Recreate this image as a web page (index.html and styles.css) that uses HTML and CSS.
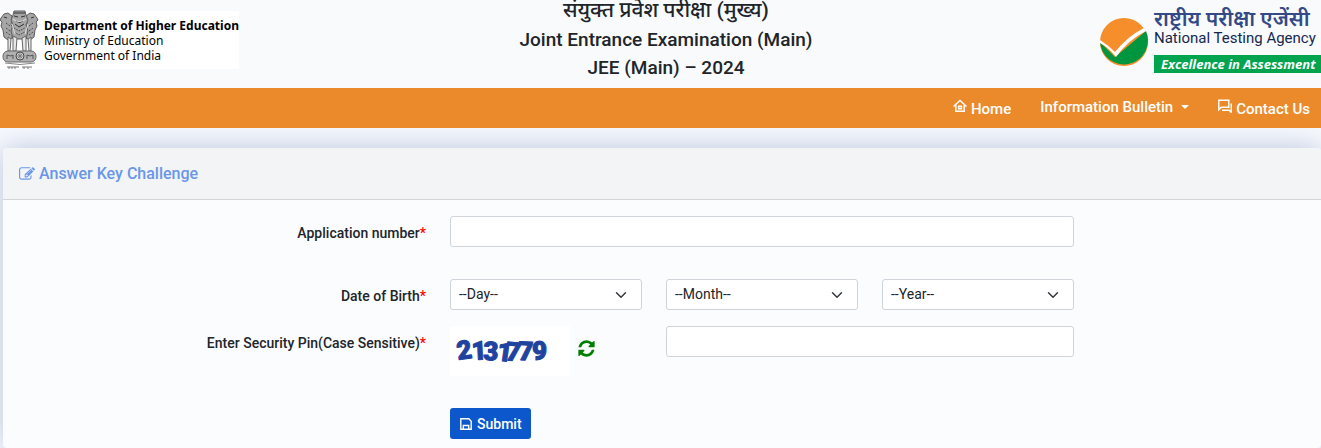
FILE: index.html
```html
<!DOCTYPE html>
<html lang="en">
<head>
    <meta charset="UTF-8">
    <meta name="viewport" content="width=device-width, initial-scale=1.0">
    <title>JEE (Main) 2024 - Answer Key Challenge</title>
    <link rel="stylesheet" href="styles.css">
</head>
<body>
    <header class="site-header">
        <div class="ministry">
            <svg class="emblem" viewBox="0 0 40 60" role="img" aria-label="State Emblem of India">
                <g fill="#a6a6a6" stroke="#5c5c5c" stroke-width="1">
                    <path d="M1 8l3-4 4-1 4 3v4l-1 4 2 5-1 9-4 2-4-3-1-7-2-4 1-4-2-2z"/>
                    <path d="M37 8l-3-4-4-1-4 3v4l1 4-2 5 1 9 4 2 4-3 1-7 2-4-1-4 2-2z"/>
                    <path d="M13 5l1-4h11l1 4 2 5-2 5 2 6-2 8H13l-2-8 2-6-2-5z"/>
                </g>
                <g fill="none" stroke="#333" stroke-width="1">
                    <path d="M14 3h11M14 6l4 1M25 6l-4 1M16 11q4 3 7 0M15 14l4 3 5-3M4 7l3 1M34 7l-3 1"/>
                    <path d="M14 18l5 3 6-3M14 22l5 3 6-3M6 13l4 3M33 13l-4 3M6 18l4 3M33 18l-4 3M6 22l4 3M33 22l-4 3" stroke-dasharray="1 1"/>
                </g>
                <path d="M13 9q6 5 13 0M12 14l3 10M28 14l-3 10" fill="none" stroke="#ddd" stroke-width="1"/>
                <g fill="#e8e8e8" stroke="#666" stroke-width="1">
                    <path d="M8 27l3 2-1 12H8zM13 26l4 2-1 13h-3zM22 28l4-2v15h-3zM28 29l3-2v14h-2z"/>
                </g>
                <rect x="3" y="41" width="33" height="11" rx="5" fill="#b0b0b0" stroke="#666"/>
                <circle cx="20" cy="46" r="4" fill="#ddd" stroke="#444"/>
                <path d="M20 42v8M16 46h8M17 43l6 6M23 43l-6 6" stroke="#777" stroke-width="1"/>
                <path d="M7 49v-4l4 1 2-1v4M27 49v-4l3 1 3-1v4" fill="none" stroke="#555"/>
                <path d="M5 53q15 3 30 0" fill="none" stroke="#888"/>
                <path d="M7 57h12M22 57h10M9 57v2M12 57v2M15 57v2M24 57v2M28 57v2" stroke="#777"/>
            </svg>
            <p class="ministry-text">
                <strong>Department of Higher Education</strong><br>
                Ministry of Education<br>
                Government of India
            </p>
        </div>

        <div class="exam-title">
            <h2 class="title-hi" lang="hi">संयुक्त प्रवेश परीक्षा (मुख्य)</h2>
            <h2>Joint Entrance Examination (Main)</h2>
            <h2>JEE (Main) – 2024</h2>
        </div>

        <div class="agency">
            <svg class="agency-mark" viewBox="0 0 48 48" aria-hidden="true">
                <circle cx="24" cy="24" r="24" fill="#f68e2b"/>
                <path d="M0 24l15 15L46 13A24 24 0 1 1 0 24z" fill="#009640"/>
                <path d="M0 22q8 5 15 12Q28 18 44 10l2 3Q28 22 16 39 9 30 0 25z" fill="#fff"/>
            </svg>
            <div class="agency-text">
                <span class="agency-hi" lang="hi">राष्ट्रीय परीक्षा एजेंसी</span>
                <span class="agency-en">National Testing Agency</span>
                <span class="agency-tag">Excellence in Assessment</span>
            </div>
        </div>
    </header>

    <nav class="navbar">
        <a href="#" class="nav-low">
            <svg class="icon-nav" viewBox="0 0 14 14" fill="none" stroke="#fff" stroke-width="1.5"><path d="M.5 7.500L7 1.500l6.500 6M2.800 6v6.300h8.400V6"/><path d="M5.600 7.300h2.800v2.500H5.600z"/></svg>
            Home
        </a>
        <a href="#">Information Bulletin <span class="caret"></span></a>
        <a href="#" class="nav-low">
            <svg class="icon-nav" viewBox="0 0 14 14" fill="none" stroke="#fff" stroke-width="1.400"><path d="M.8 10.800V1.200h10v7H3.300z"/><path d="M13.200 4.500v9l-2.200-2.300H4"/></svg>
            Contact Us
        </a>
    </nav>

    <main class="card">
        <div class="card-header">
            <svg class="icon-edit" viewBox="0 0 1792 1792" fill="currentColor"><path d="M888 1184l116-116-152-152-116 116v56h96v96h56zm440-720q-16-16-33 1L945 815q-17 17-1 33t33-1l350-350q17-17 1-33zm80 594v190q0 119-84.500 203.500T1120 1536H288q-119 0-203.500-84.500T0 1248V416q0-119 84.500-203.500T288 128h832q63 0 117 25 15 7 18 23 3 17-9 29l-49 49q-14 14-32 8-23-6-45-6H288q-66 0-113 47t-47 113v832q0 66 47 113t113 47h832q66 0 113-47t47-113v-126q0-13 9-22l64-64q15-15 35-7t20 29zm-96-738l288 288-672 672H640V928zm444 132l-92 92-288-288 92-92q28-28 68-28t68 28l152 152q28 28 28 68t-28 68z"/></svg>
            <h1>Answer Key Challenge</h1>
        </div>

        <form class="card-body">
            <div class="form-row">
                <label for="appNo">Application number<span class="required">*</span></label>
                <input type="text" id="appNo" class="span-3">
            </div>

            <div class="form-row">
                <label for="day">Date of Birth<span class="required">*</span></label>
                <select id="day"><option>--Day--</option></select>
                <select id="month" aria-label="Month"><option>--Month--</option></select>
                <select id="year" aria-label="Year"><option>--Year--</option></select>
            </div>

            <div class="form-row">
                <label for="pin">Enter Security Pin(Case Sensitive)<span class="required">*</span></label>
                <div class="captcha">
                    <svg class="captcha-image" viewBox="0 0 120 50" role="img" aria-label="Security pin">
                        <text y="34" x="8 22 33 46 55 68 82" rotate="-8 -3 2 8 6 2 0">2131779</text>
                    </svg>
                    <button type="button" class="refresh" aria-label="Refresh security pin">
                        <svg viewBox="0 0 1536 1792" fill="currentColor"><path d="M1511 1056q0 5-1 7-64 268-268 434.500T764 1664q-146 0-282.500-55T238 1452l-129 129q-19 19-45 19t-45-19-19-45v-448q0-26 19-45t45-19h448q26 0 45 19t19 45-19 45l-137 137q71 66 161 102t187 36q134 0 250-65t186-179q11-17 53-117 8-23 30-23h192q13 0 22.500 9.500t9.500 22.500zm25-800v448q0 26-19 45t-45 19h-448q-26 0-45-19t-19-45 19-45l138-138Q969 384 768 384q-134 0-250 65T332 628q-11 17-53 117-8 23-30 23H50q-13 0-22.500-9.500T18 736v-7q65-268 270-434.500T768 128q146 0 284 55.500T1297 340l130-129q19-19 45-19t45 19 19 45z"/></svg>
                    </button>
                </div>
                <input type="text" id="pin" class="span-2">
            </div>

            <div class="form-row">
                <button type="submit" class="submit">
                    <svg viewBox="0 0 12 12" fill="none" stroke="#fff" stroke-width="1.400"><path d="M.8.8h8l2.400 2.400v8H.8z"/><path d="M3.300 11V7.500h5.400V11"/></svg>
                    Submit
                </button>
            </div>
        </form>
    </main>
</body>
</html>
```
FILE: styles.css
```css
* {
    box-sizing: border-box;
}
body {
    margin: 0;
    font-family: Roboto, "Noto Sans", sans-serif;
    font-size: 14px;
    color: #212529;
    background-color: #f8fafe;
    overflow-x: hidden;
}
h1, h2, p {
    margin: 0;
}

/* Header */
.site-header {
    display: grid;
    grid-template-columns: 239px 1fr 228px;
    grid-template-rows: 88px;
    align-items: end;
    background-color: #f8fafc;
    overflow: hidden;
}
.ministry {
    display: flex;
    align-items: center;
    gap: 4px;
    height: 58px;
    margin-bottom: 19px;
    background-color: #fff;
    white-space: nowrap;
}
.emblem {
    flex: none;
    width: 40px;
    height: 60px;
}
.ministry-text {
    font-family: "Noto Sans", sans-serif;
    font-size: 12px;
    line-height: 15px;
    color: #000;
}
.exam-title {
    padding-bottom: 6px;
    text-align: center;
}
.exam-title h2 {
    font-size: 19px;
    font-weight: 500;
    line-height: 28px;
}
.exam-title .title-hi {
    font-size: 21px;
    line-height: 32px;
}
.agency {
    display: flex;
    align-items: center;
    gap: 6px;
    padding-left: 7px;
    margin-bottom: 15px;
    white-space: nowrap;
}
.agency-mark {
    flex: none;
    width: 48px;
    height: 48px;
}
.agency-text {
    display: flex;
    flex: 1;
    flex-direction: column;
}
.agency-hi {
    font-size: 21px;
    font-weight: 600;
    line-height: 16px;
    color: #344a86;
}
.agency-en {
    margin-bottom: 6px;
    font-size: 15px;
    line-height: 22px;
    color: #14284f;
}
.agency-tag {
    padding-left: 7px;
    background-color: #00a44f;
    color: #fff;
    font-family: "Open Sans", sans-serif;
    font-size: 13px;
    font-style: italic;
    font-weight: 700;
    line-height: 18px;
}

/* Navigation */
.navbar {
    display: flex;
    justify-content: flex-end;
    align-items: flex-start;
    gap: 29px;
    height: 40px;
    padding: 9px 11px 0 0;
    background-color: #eb8a2b;
}
.navbar a {
    display: flex;
    gap: 4px;
    color: #fff;
    font-size: 15px;
    font-weight: 500;
    line-height: 20px;
    text-decoration: none;
}
.navbar .nav-low {
    padding-top: 2px;
}
.icon-nav {
    width: 14px;
    height: 14px;
}
.caret {
    align-self: center;
    margin-left: 4px;
    border-top: 4px solid #fff;
    border-left: 4px solid transparent;
    border-right: 4px solid transparent;
}

/* Card */
.card {
    margin: 20px 0 0 3px;
    border-radius: 4px;
    background-color: #fbfcfe;
    box-shadow: 0 0 30px rgba(40, 70, 140, 0.3);
    clip-path: inset(-20px 0 0 -3px);
}
.card-header {
    display: flex;
    align-items: center;
    gap: 4px;
    height: 52px;
    padding-left: 16px;
    border-bottom: 1px solid #d3d5d8;
    border-radius: 4px 4px 0 0;
    background-color: #f2f4f6;
    color: #6a96ea;
}
.card-header h1 {
    font-size: 16px;
    font-weight: 500;
}
.icon-edit {
    width: 16px;
    height: 16px;
}
.card-body {
    padding: 16px 31px 9px 15px;
}
.form-row {
    display: grid;
    grid-template-columns: repeat(12, 1fr);
    column-gap: 24px;
    align-items: start;
    margin-bottom: 32px;
}
.form-row:nth-child(2) {
    margin-bottom: 16px;
}
.form-row:last-child {
    margin-bottom: 0;
}
label {
    grid-column: span 4;
    padding-top: 7px;
    font-weight: 500;
    line-height: 20px;
    text-align: right;
}
.required {
    color: #f00;
}
input, select {
    grid-column: span 2;
    width: 100%;
    height: 31px;
    padding: 4px 8px;
    border: 1px solid #ced4da;
    border-radius: 3px;
    background-color: #fff;
    color: #212529;
    font-family: inherit;
    font-size: 14px;
}
select {
    padding-bottom: 6px;
    appearance: none;
    background-image: url("data:image/svg+xml,%3csvg xmlns='http://www.w3.org/2000/svg' viewBox='0 0 16 16'%3e%3cpath fill='none' stroke='%23343a40' stroke-linecap='round' stroke-linejoin='round' stroke-width='2' d='M2 5l6 6 6-6'/%3e%3c/svg%3e");
    background-repeat: no-repeat;
    background-position: right 14px center;
    background-size: 12px;
}
.span-3 {
    grid-column: span 6;
}
.span-2 {
    grid-column: span 4;
}
.captcha {
    display: flex;
    align-items: center;
    gap: 8px;
    grid-column: span 2;
}
.captcha-image {
    width: 120px;
    height: 50px;
    background-color: #fff;
}
.captcha-image text {
    fill: #2143a0;
    stroke: #2143a0;
    stroke-width: 1px;
    stroke-linejoin: round;
    font-family: Roboto, sans-serif;
    font-size: 26px;
    font-weight: 900;
}
.refresh {
    padding: 0;
    margin-bottom: 5px;
    border: 0;
    background: none;
    color: #008000;
    cursor: pointer;
}
.refresh svg {
    display: block;
    width: 17px;
    height: 19px;
}
.submit {
    display: flex;
    align-items: center;
    justify-content: center;
    gap: 5px;
    grid-column: 5 / span 2;
    justify-self: start;
    height: 31px;
    padding: 0 9px 0 10px;
    border: 0;
    border-radius: 3px;
    background-color: #0b57cb;
    color: #fff;
    font-family: inherit;
    font-size: 14px;
    font-weight: 500;
    cursor: pointer;
}
.submit svg {
    width: 12px;
    height: 12px;
}
```
